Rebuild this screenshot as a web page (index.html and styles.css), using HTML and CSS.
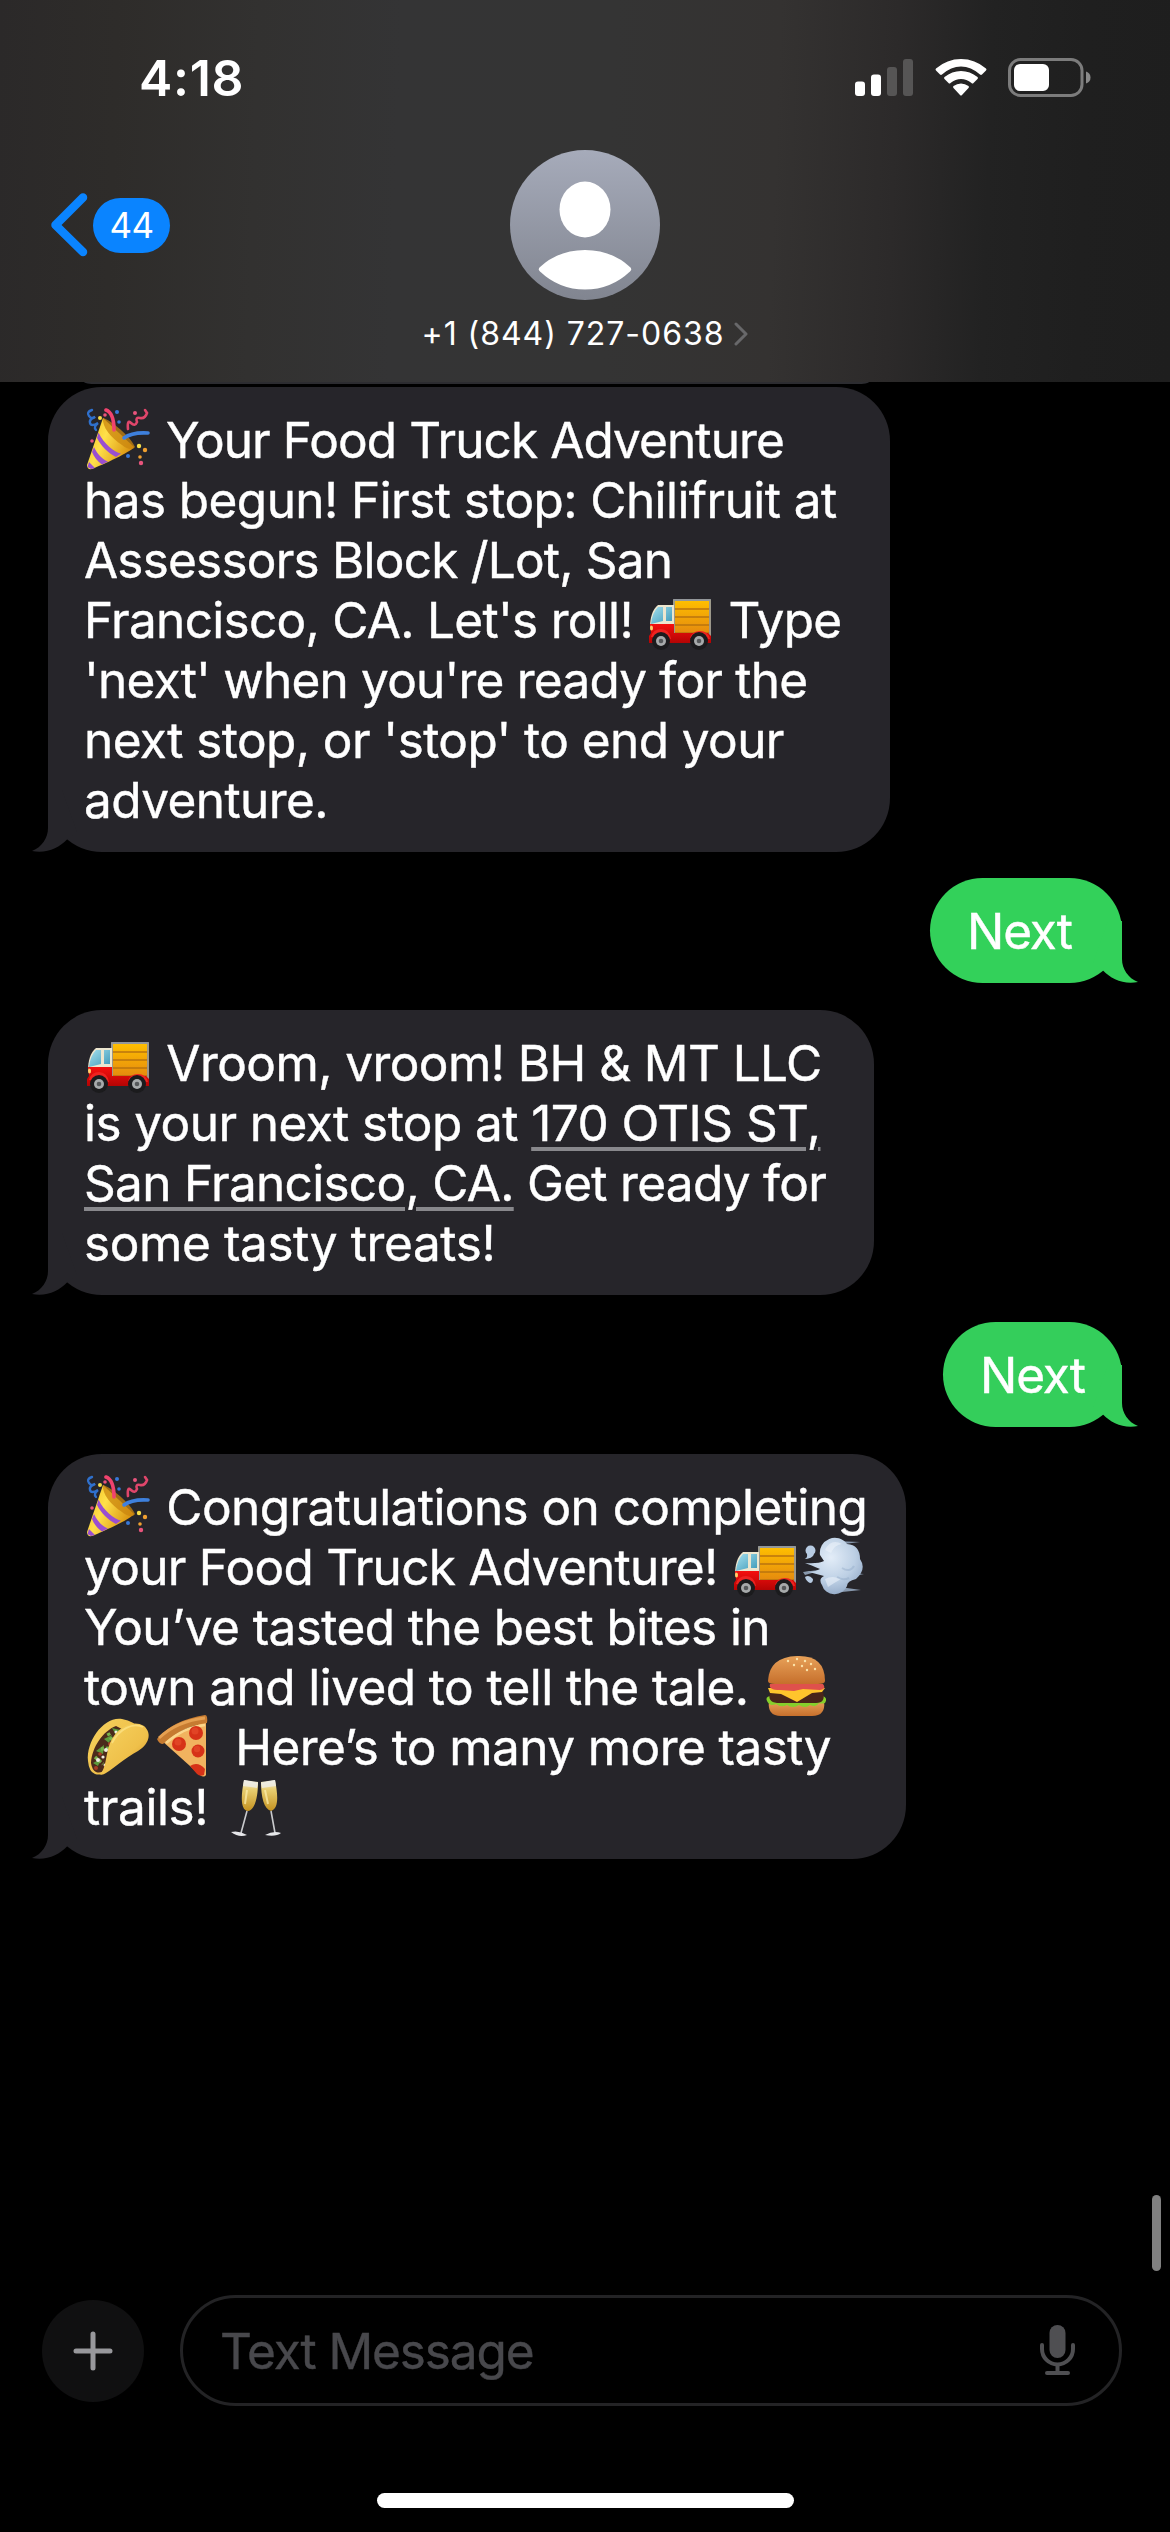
FILE: index.html
```html
<!DOCTYPE html>
<html lang="en">
<head>
<meta charset="utf-8">
<title>Messages</title>
<link rel="stylesheet" href="styles.css">
</head>
<body>
<svg class="defs" width="0" height="0" aria-hidden="true">
  <defs>
    <linearGradient id="gold" x1="0" y1="0" x2="1" y2="0.5"><stop offset="0" stop-color="#f0b91c"/><stop offset=".45" stop-color="#ffe04a"/><stop offset="1" stop-color="#d9920f"/></linearGradient>
    <linearGradient id="cargo" x1="0" y1="0" x2="0" y2="1"><stop offset="0" stop-color="#ffc000"/><stop offset="1" stop-color="#e28410"/></linearGradient>
    <linearGradient id="cab" x1="0" y1="0" x2="0" y2="1"><stop offset="0" stop-color="#f5100e"/><stop offset="1" stop-color="#b40404"/></linearGradient>
    <linearGradient id="glass" x1="0" y1="0" x2="1" y2="1"><stop offset="0" stop-color="#a5e0ee"/><stop offset="1" stop-color="#3c98b8"/></linearGradient>
    <radialGradient id="puff" cx=".45" cy=".35" r=".7"><stop offset="0" stop-color="#e3edf8"/><stop offset=".6" stop-color="#bccfe4"/><stop offset="1" stop-color="#91a8c6"/></radialGradient>
    <linearGradient id="bun" x1="0" y1="0" x2="0" y2="1"><stop offset="0" stop-color="#e8a259"/><stop offset="1" stop-color="#c66f2c"/></linearGradient>
    <linearGradient id="shell" x1="0" y1="0" x2="1" y2="1"><stop offset="0" stop-color="#f6d360"/><stop offset=".6" stop-color="#efc04a"/><stop offset="1" stop-color="#cf8c20"/></linearGradient>
    <linearGradient id="wine" x1="0" y1="0" x2="0" y2="1"><stop offset="0" stop-color="#f3f1e4"/><stop offset=".3" stop-color="#e9cf72"/><stop offset="1" stop-color="#c49220"/></linearGradient>
    <linearGradient id="face" x1="0" y1="0" x2="0" y2="1"><stop offset="0" stop-color="#a6abba"/><stop offset="1" stop-color="#818590"/></linearGradient>
    <symbol id="party" viewBox="0 0 69 62">
      <path d="M19 10 50 39C47 44 20 56 8 61Q3 62 3 57Z" fill="url(#gold)"/>
      <path d="M19 10C27 12 47 29 51 39 48 43 43 41 38 37 27 30 18 19 19 10Z" fill="#c9860f" opacity=".75"/>
      <path d="M14.500 24.500C20 36 30 44 37 45.500L32 49C24 45 17 38 13 30ZM10 39C13 46 19 52 24 53.500L18 56.500C13 53 10 49 8 44ZM5 54 11 60 7 61 3.500 59Z" fill="#9a4fd0"/>
      <path d="M22 2Q30 5 30 22" fill="none" stroke="#f0436e" stroke-width="3.600" stroke-linecap="round"/>
      <path d="M40 30Q48 24 64 25" fill="none" stroke="#3e80dd" stroke-width="3.600" stroke-linecap="round"/>
      <path d="M44 21Q43 11 47 15T53 14Q51 9 56 10T63 5L61 2" fill="none" stroke="#e0466b" stroke-width="2.600" stroke-linecap="round"/>
      <path d="M8 2Q2 4 5 8T11 9Q5 11 6 15T14 15Q9 19 12 22" fill="none" stroke="#2f70cc" stroke-width="2.400" stroke-linecap="round"/>
      <g fill="#e8547c"><circle cx="51" cy="5" r="2"/><circle cx="8" cy="33" r="1.800"/><circle cx="57" cy="55" r="2.200"/><circle cx="21" cy="7" r="1.800"/></g>
      <g fill="#3778d8"><circle cx="33" cy="4" r="2"/><circle cx="35" cy="14" r="1.800"/><circle cx="44" cy="48" r="2"/></g>
      <g fill="#f0a030"><circle cx="61" cy="42" r="2.200"/><circle cx="56" cy="49" r="1.800"/></g>
      <g fill="#f7e04a"><circle cx="16" cy="10" r="2"/><circle cx="55" cy="38" r="2.200"/></g>
    </symbol>
    <symbol id="truck" viewBox="0 0 69 62">
      <path d="M27 12H65V49H27Z" fill="url(#cargo)"/>
      <path d="M27 21H64M27 29H64M27 37H64M27 45H64" stroke="#b9740f" stroke-width="1.300"/>
      <path d="M28 49V12H64V48" fill="none" stroke="#93979a" stroke-width="1.800"/>
      <path d="M12 17H28V40H4C4 30 6 22 12 17Z" fill="#ece6cf"/>
      <path d="M12 19H17V33L5 36Q6 25 12 19ZM20 19H26V33H20Z" fill="url(#glass)"/>
      <path d="M4 36H28V45H62L65 48V55H3V48L5 45Z" fill="url(#cab)"/>
      <path d="M5 49Q7 41 15 41T25 51ZM44 50Q46 43 54 43T64 51Z" fill="#ee2320"/>
      <ellipse cx="5.500" cy="40" rx="1.500" ry="2.500" fill="#ffcf6b"/>
      <g fill="#1b1b1d"><circle cx="15" cy="53" r="9"/><circle cx="53" cy="53" r="9"/></g>
      <g fill="#a7aaab"><circle cx="15" cy="53" r="5"/><circle cx="53" cy="53" r="5"/></g>
      <g fill="#55585a"><circle cx="15" cy="53" r="2.300"/><circle cx="53" cy="53" r="2.300"/></g>
    </symbol>
    <symbol id="dash" viewBox="0 0 69 62">
      <path d="M34 6 60 7 44 9ZM40 52 61 55 42 57ZM3 37 26 34 5 40ZM50 38 64 39 50 42Z" fill="#8798ad"/>
      <path d="M3 24Q8 24 7 19A5 5 0 1 1 14 19Q13 24 3 24ZM5 42Q9 39 13 44 13 48 10 48 6 46 5 42Z" fill="#b7cbe2"/>
      <path d="M20 20A15 15 0 0 1 47 9Q60 10 60 24 67 34 56 44 47 46 47 51A13 12 0 0 1 22 50Q18 44 24 41L5 36Q14 38 20 34 11 30 5 28 18 29 24 26Z" fill="url(#puff)"/>
      <path d="M25 15Q31 3 42 9 34 10 31 18ZM25 44Q32 40 41 44 34 48 28 52Z" fill="#eef4fb" opacity=".55"/>
      <path d="M42 33Q50 38 54 31M37 42Q43 46 49 43" fill="none" stroke="#88a1c0" stroke-width="2" opacity=".35"/>
    </symbol>
    <symbol id="burger" viewBox="0 0 69 62">
      <path d="M7 46H62Q64 61 50 61H19Q5 61 7 46Z" fill="url(#bun)"/>
      <path d="M5 46Q3 42 8 41H61Q66 43 63 48 60 49 57 48 54 53 48 50 43 54 37 50 31 54 25 50 19 53 14 49 8 52 5 46Z" fill="#86cf2b"/>
      <path d="M8 37H61Q64 48 54 48H15Q5 47 8 37Z" fill="#49251a"/>
      <path d="M6 33H63L60 37 50 38 35 47 19 39 8 38Z" fill="#ffc42c"/>
      <path d="M8 29H61Q65 34 58 35L41 34 32 36 18 35Q6 35 8 29Z" fill="#df514c"/>
      <path d="M6 26Q7 2 35 1T63 26Q63 29 56 29H13Q6 29 6 26Z" fill="url(#bun)"/>
      <g fill="#fbe3a8"><circle cx="26" cy="6" r="1.200"/><circle cx="35" cy="4" r="1.200"/><circle cx="43" cy="6" r="1.200"/><circle cx="32" cy="10" r="1.200"/><circle cx="40" cy="11" r="1.200"/><circle cx="49" cy="9" r="1.200"/><circle cx="53" cy="14" r="1.200"/><circle cx="45" cy="15" r="1.200"/></g>
    </symbol>
    <symbol id="taco" viewBox="0 0 69 62">
      <path d="M4 46C2 26 20 1 38 4Q51 6 53 14L28 50Q20 62 11 59 5 57 4 46Z" fill="url(#shell)"/>
      <path d="M7 48C8 32 19 16 32 11L42 16 27 42 22 54Q17 59 12 57 8 55 7 48Z" fill="#4b2a1c"/>
      <path d="M28 13 36 15 32 20ZM20 24 28 20 25 28ZM12 36 20 30 19 39ZM9 48 17 44 14 51Z" fill="#5c9b3c"/>
      <path d="M24 18 28 25M17 34 26 33M11 42 19 49" stroke="#79b24e" stroke-width="3.500" stroke-dasharray="3 2"/>
      <g fill="#efece2"><circle cx="22" cy="35" r="2"/><circle cx="14" cy="45" r="2"/><circle cx="19" cy="42" r="1.600"/><circle cx="32" cy="17" r="1.500"/><circle cx="21" cy="50" r="1.500"/></g>
      <g fill="#a83c25"><circle cx="26" cy="29" r="2"/><circle cx="16" cy="39" r="1.800"/><circle cx="12" cy="53" r="2"/></g>
      <path d="M15 59C23 56 21 36 28 24 36 10 50 5 60 11 69 19 64 30 54 36 41 43 30 53 22 58Q18 61 15 59Z" fill="url(#shell)"/>
      <path d="M28 28C35 14 49 7 59 12" fill="none" stroke="#fde58a" stroke-width="1.800" opacity=".7"/>
    </symbol>
    <symbol id="pizza" viewBox="0 0 69 62">
      <path d="M8 25 53 6V60Q51 63 47 60Z" fill="#f1b35f"/>
      <path d="M4 24Q20 5 52 0 55 0 54 8 30 11 10 29 6 29 4 24Z" fill="#c67b31"/>
      <path d="M6 23Q24 6 52 3" fill="none" stroke="#e5a051" stroke-width="3"/>
      <path d="M13 28Q31 12 52 10" fill="none" stroke="#fbd68b" stroke-width="2.500"/>
      <g fill="#d63218"><circle cx="43" cy="18" r="7"/><circle cx="26" cy="29" r="7"/><circle cx="45" cy="36" r="6.500"/><path d="M37 51Q45 46 52 54L51 60Q47 62 44 59Z"/></g>
      <g fill="#ef5b35" opacity=".45"><circle cx="42" cy="16" r="3.500"/><circle cx="25" cy="27" r="3.500"/><circle cx="44" cy="34" r="3.200"/></g>
    </symbol>
    <symbol id="clink" viewBox="0 0 69 62">
      <path d="M22 5 36 7C36 22 33 35 26 36 18 35 19 20 22 5ZM39 7 53 5C56 20 57 34 49 36 42 34 39 22 39 7Z" fill="url(#wine)"/>
      <path d="M22 5 36 8 35 13 21 11ZM39 8 53 5 54 11 40 13Z" fill="#edeee9" opacity=".8"/>
      <path d="M25 36 19 58M49 36 53 58" stroke="#c9cacd" stroke-width="1.600"/>
      <path d="M9 57Q17 55 25 60 17 63 9 57ZM43 60Q52 55 59 58 54 62 43 60Z" fill="#e6e7ea"/>
      <path d="M25 15 23 29M43 15 46 29" stroke="#fff1b0" stroke-width="2" opacity=".7"/>
    </symbol>
    <symbol id="tail" viewBox="0 0 46 62"><path d="M16 0V38C16 48 10 57 0 61 14 64 27 58 35 49.500L45 42 30 0Z"/></symbol>
  </defs>
</svg>

<div class="screen">
  <header class="header">
    <div class="status">
      <span class="time">4:18</span>
      <div class="indicators">
        <svg class="signal" width="58" height="37" viewBox="0 0 58 37" fill="#fff"><rect y="22.500" width="10" height="14.500" rx="3"/><rect x="16" y="15.500" width="10" height="21.500" rx="3"/><g fill="#565555"><rect x="32" y="8" width="10" height="29" rx="3"/><rect x="48" width="10" height="37" rx="3"/></g></svg>
        <svg class="wifi" width="52" height="38" viewBox="0 0 52 38" fill="#fff"><path d="M1 9.500Q12 0 26 0T51 9.500Q52 10.500 51 11.500L47 15.500Q46 16.400 45 15.500 36 7.500 26 7.500T7 15.500Q6 16.400 5 15.500L1 11.500Q0 10.500 1 9.500ZM9.500 18Q17 12 26 12T42.500 18Q43.500 19 42.500 20L38.500 24Q37.500 25 36.500 24 31.500 20 26 20T15.500 24Q14.500 25 13.500 24L9.500 20Q8.500 19 9.500 18ZM18.500 27Q22 24.500 26 24.500T33.500 27Q34.500 28 33.500 29L27 36Q26 37 25 36L18.500 29Q17.500 28 18.500 27Z"/></svg>
        <svg class="battery" width="83" height="39" viewBox="0 0 83 39"><rect x="1.500" y="1.500" width="72.500" height="36" rx="11" fill="none" stroke="#7c7c7c" stroke-width="3"/><rect x="6" y="6" width="35" height="27" rx="6" fill="#fff"/><path d="M78 13.500Q82.500 15 82.500 19.500T78 25.500Z" fill="#8a8a8a"/></svg>
      </div>
    </div>
    <div class="nav">
      <div class="back">
        <svg width="38" height="64" viewBox="0 0 38 64" fill="none" stroke="#0a84ff" stroke-width="8.500" stroke-linecap="round" stroke-linejoin="round"><path d="M33 4.500 5.500 32 33 59"/></svg>
        <span class="count">44</span>
      </div>
      <div class="contact">
        <svg width="150" height="150" viewBox="0 0 150 150"><circle cx="75" cy="75" r="75" fill="url(#face)"/><ellipse cx="75" cy="59.500" rx="25.500" ry="28" fill="#fff"/><path d="M29.500 117.500Q48 100 75 100T120.500 117.500Q122 119.500 120 121.500 101 139.500 75 139.500T30 121.500Q28 119.500 29.500 117.500Z" fill="#fff"/></svg>
        <div class="number"><span>+1 (844) 727-0638</span><svg width="14" height="24" viewBox="0 0 14 24" fill="none" stroke="#68686a" stroke-width="3" stroke-linecap="round" stroke-linejoin="round"><path d="M2 2 12 12 2 22"/></svg></div>
      </div>
    </div>
  </header>

  <main class="thread">
    <div class="previous"></div>
    <div class="bubble in b1">
      <span class="line tightest"><svg class="emoji"><use href="#party"/></svg> Your Food Truck Adventure</span>
      <span class="line">has begun! First stop: Chilifruit at</span>
      <span class="line tighter">Assessors Block /Lot, San</span>
      <span class="line tight">Francisco, CA. Let's roll! <svg class="emoji"><use href="#truck"/></svg> Type</span>
      <span class="line tighter">'next' when you're ready for the</span>
      <span class="line">next stop, or 'stop' to end your</span>
      <span class="line">adventure.</span>
      <svg class="tail"><use href="#tail"/></svg>
    </div>
    <div class="bubble out g1"><span class="line">Next</span><svg class="tail"><use href="#tail"/></svg></div>
    <div class="bubble in b2">
      <span class="line"><svg class="emoji"><use href="#truck"/></svg> Vroom, vroom! BH &amp; MT LLC</span>
      <span class="line">is your next stop at <a class="address">170 OTIS ST,</a></span>
      <span class="line tight"><a class="address">San Francisco, CA.</a> Get ready for</span>
      <span class="line loose">some tasty treats!</span>
      <svg class="tail"><use href="#tail"/></svg>
    </div>
    <div class="bubble out g2"><span class="line">Next</span><svg class="tail"><use href="#tail"/></svg></div>
    <div class="bubble in b3">
      <span class="line"><svg class="emoji"><use href="#party"/></svg> Congratulations on completing</span>
      <span class="line tight">your Food Truck Adventure! <svg class="emoji"><use href="#truck"/></svg><svg class="emoji"><use href="#dash"/></svg></span>
      <span class="line">You’ve tasted the best bites in</span>
      <span class="line">town and lived to tell the tale. <svg class="emoji"><use href="#burger"/></svg></span>
      <span class="line"><svg class="emoji"><use href="#taco"/></svg><svg class="emoji"><use href="#pizza"/></svg> Here’s to many more tasty</span>
      <span class="line loose">trails! <svg class="emoji"><use href="#clink"/></svg></span>
      <svg class="tail"><use href="#tail"/></svg>
    </div>
    <div class="scrollbar"></div>
  </main>

  <footer class="composer">
    <div class="bar">
      <div class="add"><svg width="40" height="40" viewBox="0 0 40 40" stroke="#98989c" stroke-width="5" stroke-linecap="round"><path d="M20 3V37M3 20H37"/></svg></div>
      <div class="field">
        <span class="placeholder">Text Message</span>
        <svg width="35" height="51" viewBox="0 0 35 51" fill="none" stroke="#4f4f52" stroke-linecap="round"><rect x="9.500" y="0" width="16" height="33" rx="8" fill="#4f4f52" stroke="none"/><path d="M2 20V24A15.500 15.500 0 0 0 33 24V20M17.500 40V48M7 48H28" stroke-width="4"/></svg>
      </div>
    </div>
    <div class="home"></div>
  </footer>
</div>
</body>
</html>
```
FILE: styles.css
```css
* { box-sizing: border-box; }
body { margin: 0; background: #000; }
svg { display: block; flex: none; }
.defs { position: absolute; }
.screen {
  width: 1170px;
  height: 2532px;
  display: flex;
  flex-direction: column;
  overflow: hidden;
  background: #000;
  color: #fff;
  font-family: Inter, "Liberation Sans", sans-serif;
}

/* Header */
.header {
  height: 382px;
  background: linear-gradient(92deg, #2b2929 0, #2e2c2a 10%, #323130 22%, #343435 34%, #343434 52%, #343231 66%, #2c2a2a 76%, #222 84%, #1f1f1f 92%, #1e1e1e 100%);
}
.status {
  height: 150px;
  padding: 58px 79px 0 139px;
  display: flex;
  justify-content: space-between;
}
.time {
  height: 40px;
  font-size: 50px;
  line-height: 40px;
  font-weight: 600;
  letter-spacing: 0.7px;
}
.indicators { display: flex; }
.signal { margin-top: 1px; }
.wifi { margin: 1px 21px 0 22px; }
.nav {
  display: grid;
  grid-template-columns: 1fr auto 1fr;
  padding: 0 50px;
}
.back { display: flex; align-items: center; height: 150px; gap: 5px; }
.count {
  width: 77px;
  height: 55px;
  border-radius: 28px;
  background: #0a84ff;
  text-align: center;
  font-size: 35px;
  line-height: 55px;
  letter-spacing: -0.6px;
}
.contact { display: flex; flex-direction: column; align-items: center; }
.number {
  display: flex;
  align-items: center;
  gap: 10px;
  margin-top: 14px;
  height: 40px;
  font-size: 32px;
  line-height: 40px;
  letter-spacing: 0.95px;
  white-space: nowrap;
}

/* Conversation */
.thread {
  position: relative;
  height: 1899px;
  display: flex;
  flex-direction: column;
  align-items: flex-start;
  padding: 0 48px;
}
.previous {
  width: 785px;
  height: 2px;
  margin: 0 36px 3px;
  border-radius: 0 0 12px 12px / 0 0 2px 2px;
  background: #2c2c30;
}
.bubble {
  position: relative;
  padding: 23px 36px 22px;
  border-radius: 54px;
  font-size: 49.5px;
  line-height: 60px;
  letter-spacing: -0.57px;
  margin-bottom: 27px;
  -webkit-text-stroke: 0.4px #fff;
}
.in { background: #26252a; fill: #26252a; }
.out { align-self: flex-end; background: #33d15a; fill: #33d15a; padding-left: 37px; letter-spacing: -1.1px; }
.b1 { width: 842px; margin-bottom: 26px; }
.b2 { width: 826px; }
.b3 { width: 858px; }
.g1 { width: 192px; }
.g2 { width: 179px; background: #34ce5b; fill: #34ce5b; }
.line { display: block; height: 60px; white-space: nowrap; }
.loose { letter-spacing: -0.4px; }
.tight { letter-spacing: -0.7px; }
.tighter { letter-spacing: -0.79px; }
.tightest { letter-spacing: -0.9px; }
.emoji {
  display: inline-block;
  width: 69px;
  height: 62px;
  margin-top: -8px;
  vertical-align: -12px;
}
.tail { position: absolute; left: -16px; bottom: 0; width: 46px; height: 62px; }
.out .tail { left: auto; right: -16px; transform: scaleX(-1); }
.address {
  text-decoration: underline;
  text-decoration-color: #88888c;
  text-decoration-thickness: 4px;
  text-underline-offset: 6px;
}
.scrollbar {
  position: absolute;
  right: 9px;
  top: 1813px;
  width: 9px;
  height: 76px;
  border-radius: 5px;
  background: #808080;
}

/* Composer */
.composer { padding: 14px 48px 0 42px; }
.bar { display: flex; align-items: center; gap: 36px; }
.add {
  width: 102px;
  height: 102px;
  display: grid;
  place-items: center;
  border-radius: 50%;
  background: #101011;
}
.field {
  flex: 1;
  height: 111px;
  padding: 0 44px 0 37px;
  display: flex;
  align-items: center;
  justify-content: space-between;
  border: 3px solid #232325;
  border-radius: 56px;
}
.placeholder { font-size: 49.5px; letter-spacing: -1.1px; color: #48484c; -webkit-text-stroke: 0.4px #48484c; }
.home { width: 417px; height: 15px; margin: 87px auto 0 335px; border-radius: 8px; background: #fff; }
```
